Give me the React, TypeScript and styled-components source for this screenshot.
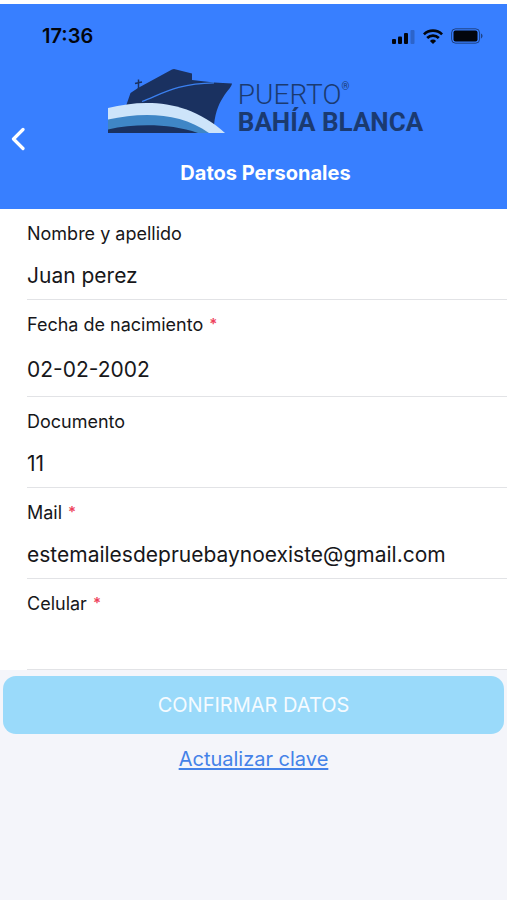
import React from "react";
import styled, { createGlobalStyle } from "styled-components";

const GlobalStyle = createGlobalStyle`
  * { box-sizing: border-box; }
  body {
    margin: 0;
    background: #f4f5fa;
    font-family: Inter, "Liberation Sans", sans-serif;
    color: #17171a;
  }
`;

const Screen = styled.div`
  display: flex;
  flex-direction: column;
  min-height: 100vh;
  border-top: 4px solid #ffffff;
`;

const Header = styled.header`
  background: #387fff;
  color: #ffffff;
`;

const StatusBar = styled.div`
  display: flex;
  align-items: center;
  justify-content: space-between;
  height: 64px;
  padding: 0 24px 0 42px;
  color: #03060d;
`;

const Clock = styled.time`
  font-size: 20px;
  font-weight: 600;
  line-height: 24px;
`;

const StatusIcons = styled.div`
  display: flex;
  align-items: center;
  gap: 8px;
`;

const NavBar = styled.div`
  display: grid;
  grid-template-columns: 24px 1fr;
  align-items: center;
  height: 141px;
`;

const BackButton = styled.button`
  display: flex;
  justify-content: flex-end;
  width: 28px;
  padding: 8px 3px 10px 8px;
  border: 0;
  background: none;
  color: inherit;
`;

const Brand = styled.div`
  display: flex;
  flex-direction: column;
  align-items: center;
  gap: 28px;
  padding-bottom: 26px;
`;

const Logo = styled.div`
  display: flex;
  align-items: flex-end;
  gap: 6px;
  color: #1b3a70;
`;

const LogoText = styled.div`
  display: flex;
  flex-direction: column;
  font-family: Roboto, "Liberation Sans", sans-serif;
  white-space: nowrap;
`;

const LogoTop = styled.span`
  font-size: 28px;
  font-weight: 300;
  line-height: 32px;
`;

const Registered = styled.sup`
  font-size: 10px;
  font-weight: 500;
  line-height: 10px;
  vertical-align: 14px;
`;

const LogoBottom = styled.span`
  font-size: 26px;
  font-weight: 700;
  line-height: 22px;
`;

const Title = styled.h1`
  margin: 0;
  font-size: 20px;
  font-weight: 700;
  line-height: 24px;
`;

const Form = styled.form`
  display: flex;
  flex-direction: column;
`;

const Fields = styled.div`
  padding-left: 27px;
  background: #ffffff;
`;

const Field = styled.div`
  display: flex;
  flex-direction: column;
  gap: 11px;
  padding: 13px 0 6px;
  border-bottom: 1px solid #e2e3e6;
`;

const Label = styled.label`
  font-size: 18px;
  line-height: 24px;
`;

const Required = styled.span`
  margin-left: 6px;
  color: #ee3f5c;
  font-size: 15px;
  font-weight: 600;
  line-height: 15px;
  vertical-align: 2px;
`;

const Input = styled.input<{ $tall?: boolean }>`
  width: 100%;
  height: ${({ $tall }) => ($tall ? 42 : 36)}px;
  padding: 0;
  border: 0;
  outline: 0;
  background: transparent;
  color: inherit;
  font-family: inherit;
  font-size: 21px;
`;

const Actions = styled.div`
  display: flex;
  flex-direction: column;
  align-items: center;
  gap: 12px;
  padding: 6px 3px;
`;

const SubmitButton = styled.button`
  width: 100%;
  height: 58px;
  border: 0;
  border-radius: 13px;
  background: #9adafa;
  color: #f5fbff;
  font-family: inherit;
  font-size: 20px;
`;

const TextLink = styled.a`
  color: #4482e8;
  font-size: 20px;
  line-height: 26px;
  text-decoration-thickness: 2px;
  text-underline-offset: 2px;
`;

const SignalIcon = () => (
  <svg width="23" height="15" viewBox="0 0 23 15" fill="currentColor" aria-hidden="true">
    <rect x="0" y="10" width="4" height="5" rx="1" />
    <rect x="6" y="7.5" width="4" height="7.5" rx="1" />
    <rect x="12" y="4" width="4" height="11" rx="1" />
    <rect x="18.500" y="1" width="4" height="14" rx="1" opacity="0.22" />
  </svg>
);

const WifiIcon = () => (
  <svg width="20" height="15" viewBox="0 0 20 15" aria-hidden="true">
    <g fill="none" stroke="currentColor" strokeWidth="2.700">
      <path d="M0.900 5.400a13 13 0 0 1 18.200 0" />
      <path d="M4.200 9a8.300 8.300 0 0 1 11.600 0" />
    </g>
    <path d="M10 15 6.900 11.900a4.400 4.400 0 0 1 6.200 0z" fill="currentColor" />
  </svg>
);

const BatteryIcon = () => (
  <svg width="32" height="16" viewBox="0 0 32 16" aria-hidden="true">
    <rect x="0.600" y="0.800" width="28" height="14.400" rx="4" fill="none" stroke="currentColor" strokeOpacity="0.500" />
    <rect x="2.500" y="2.600" width="24" height="10.800" rx="2" fill="currentColor" />
    <path d="M30 5.600c2 .8 2 4 0 4.800z" fill="currentColor" opacity="0.500" />
  </svg>
);

const BackIcon = () => (
  <svg width="14" height="24" viewBox="0 0 14 24" fill="none" aria-hidden="true">
    <path d="M12 2.500 2.500 12 12 21.500" stroke="currentColor" strokeWidth="3.200" strokeLinecap="round" strokeLinejoin="round" />
  </svg>
);

const ShipIcon = () => (
  <svg width="124" height="65" viewBox="0 0 124 65" aria-hidden="true">
    <path
      d="M18 38 22.500 25 30 20 64 1.500 66 1 84 5.500V12L106 14.500 124 15.500C123.500 19 120 22 116.500 27 112 34 107.500 42 106 57L60 50Z"
      fill="#1a3160"
    />
    <path d="M30.500 11.500V21M27 15.500 34 14" stroke="#1a3160" strokeWidth="1.500" fill="none" />
    <path d="M34 33.500C54 26 68 15.500 106 14.800" stroke="#3b80f0" strokeWidth="1.300" fill="none" />
    <path d="M0 40C36 31 80 31 117 65H0Z" fill="#cde4fa" />
    <path d="M0 51.500C34 44 72 44 101 65H0Z" fill="#3f86c6" />
    <path d="M0 61.500C28 55.500 62 55.500 90 65H0Z" fill="#1a3160" />
  </svg>
);

type FieldData = {
  id: string;
  label: string;
  value: string;
  type: string;
  required?: boolean;
  tall?: boolean;
};

const fields: FieldData[] = [
  { id: "nombre", label: "Nombre y apellido", value: "Juan perez", type: "text" },
  { id: "nacimiento", label: "Fecha de nacimiento", value: "02-02-2002", type: "text", required: true, tall: true },
  { id: "documento", label: "Documento", value: "11", type: "text" },
  { id: "mail", label: "Mail", value: "estemailesdepruebaynoexiste@gmail.com", type: "email", required: true },
  { id: "celular", label: "Celular", value: "", type: "tel", required: true },
];

export default function App() {
  return (
    <>
      <GlobalStyle />
      <Screen>
        <Header>
          <StatusBar>
            <Clock>17:36</Clock>
            <StatusIcons>
              <SignalIcon />
              <WifiIcon />
              <BatteryIcon />
            </StatusIcons>
          </StatusBar>
          <NavBar>
            <BackButton type="button" aria-label="Volver">
              <BackIcon />
            </BackButton>
            <Brand>
              <Logo>
                <ShipIcon />
                <LogoText>
                  <LogoTop>
                    PUERTO<Registered>®</Registered>
                  </LogoTop>
                  <LogoBottom>BAHÍA BLANCA</LogoBottom>
                </LogoText>
              </Logo>
              <Title>Datos Personales</Title>
            </Brand>
          </NavBar>
        </Header>
        <Form onSubmit={(event) => event.preventDefault()}>
          <Fields>
            {fields.map((field) => (
              <Field key={field.id}>
                <Label htmlFor={field.id}>
                  {field.label}
                  {field.required && <Required>*</Required>}
                </Label>
                <Input id={field.id} type={field.type} defaultValue={field.value} $tall={field.tall} />
              </Field>
            ))}
          </Fields>
          <Actions>
            <SubmitButton type="submit">CONFIRMAR DATOS</SubmitButton>
            <TextLink href="#clave">Actualizar clave</TextLink>
          </Actions>
        </Form>
      </Screen>
    </>
  );
}
